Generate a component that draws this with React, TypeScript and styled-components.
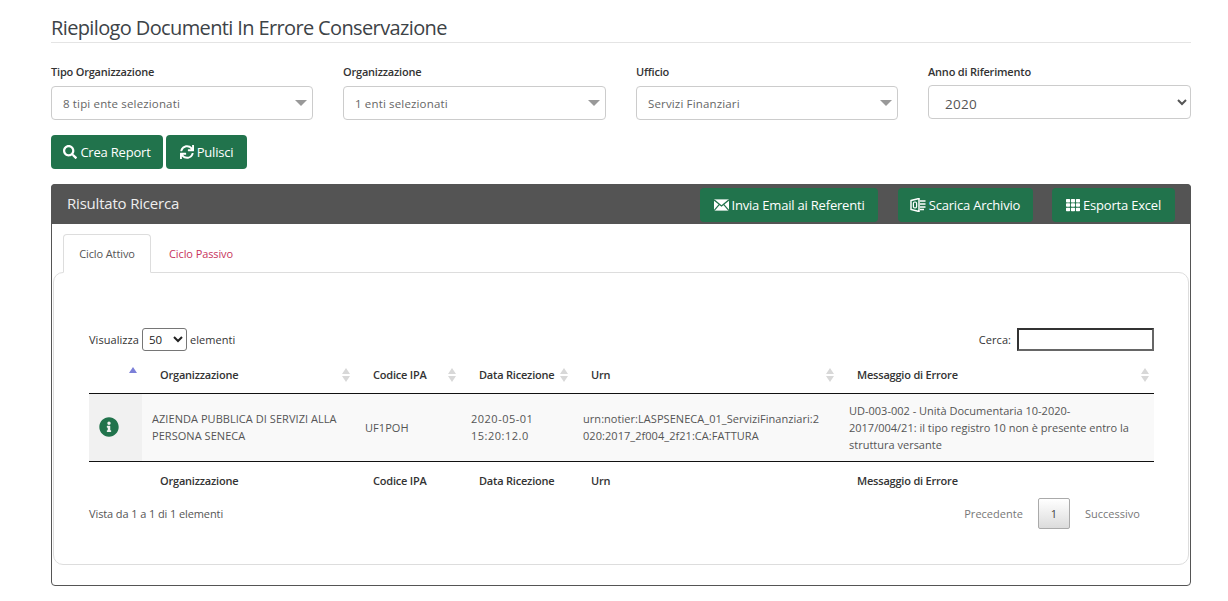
import React from 'react';
import styled, { createGlobalStyle } from 'styled-components';
import { FaSearch, FaSync, FaTh, FaInfoCircle } from 'react-icons/fa';

const GlobalStyle = createGlobalStyle`
    html, body {
        margin: 0;
        padding: 0;
        background: #fff;
        font-family: "Open Sans", "Liberation Sans", sans-serif;
        color: #4a4a4a;
        overflow: hidden;
    }
`;

const Page = styled.div`
    width: 1228px;
    height: 601px;
    box-sizing: border-box;
    padding: 15px 37px 0 51px;
`;

const Title = styled.h3`
    margin: 0;
    height: 27px;
    line-height: 26px;
    font-family: "Open Sans", sans-serif;
    font-size: 20px;
    font-weight: 400;
    letter-spacing: -0.63px;
    color: #3d4347;
    border-bottom: 1px solid #e4e4e4;
`;

const Filters = styled.div`
    display: grid;
    grid-template-columns: 262px 263px 262px 263px;
    column-gap: 30px;
    margin-top: 22px;
`;

const Field = styled.div`
    display: flex;
    flex-direction: column;
`;

const Label = styled.label`
    font-size: 11px;
    font-weight: 600;
    line-height: 14px;
    height: 21px;
    color: #333;
    letter-spacing: -0.2px;
`;

const FakeSelect = styled.div`
    height: 34px;
    box-sizing: border-box;
    border: 1px solid #ccc;
    border-radius: 4px;
    padding: 0 5px 0 11px;
    display: flex;
    align-items: center;
    justify-content: space-between;
    font-size: 11.5px;
    color: #666;
    letter-spacing: 0.15px;
`;

const Caret = styled.span`
    width: 0;
    height: 0;
    border-left: 6px solid transparent;
    border-right: 6px solid transparent;
    border-top: 6px solid #999;
`;

const YearSelect = styled.select`
    height: 34px;
    margin-top: -1px;
    box-sizing: border-box;
    border: 1px solid #ccc;
    border-radius: 4px;
    background: #fff;
    padding: 4px 12px 0;
    font-family: inherit;
    font-size: 13.5px;
    letter-spacing: 0.3px;
    color: #555;
`;

const Actions = styled.div`
    display: flex;
    gap: 3px;
    margin-top: 15px;
`;

const GreenButton = styled.button<{ $w: number }>`
    width: ${p => p.$w}px;
    height: 34px;
    padding: 0;
    display: inline-flex;
    align-items: center;
    justify-content: center;
    gap: 3px;
    border: none;
    border-radius: 4px;
    background: #21734c;
    color: #fff;
    font-family: inherit;
    font-size: 13px;
    letter-spacing: -0.2px;
    white-space: nowrap;
`;

const Panel = styled.section`
    margin-top: 15px;
    height: 402px;
    box-sizing: border-box;
    border: 1px solid #555;
    border-radius: 4px;
    background: #fff;
`;

const PanelHeader = styled.header`
    height: 40px;
    margin: -1px -1px 0;
    padding: 0 16px;
    background: #545454;
    border-radius: 4px 4px 0 0;
    display: flex;
    align-items: center;
    color: #eee;
`;

const PanelTitle = styled.div`
    font-size: 15px;
    font-weight: 400;
    letter-spacing: -0.2px;
    margin-top: -3px;
    margin-right: auto;
`;

const HeaderButtons = styled.div`
    display: flex;
    gap: 19.5px;
    margin-top: 2px;
`;

const Tabs = styled.nav`
    display: flex;
    margin: 10px 0 0 11px;
    height: 39px;
    font-size: 11px;
    letter-spacing: -0.1px;
`;

const Tab = styled.div<{ $active?: boolean }>`
    width: ${p => (p.$active ? '88px' : 'auto')};
    box-sizing: border-box;
    padding: ${p => (p.$active ? '0' : '0 17px')};
    display: flex;
    align-items: center;
    justify-content: center;
    color: ${p => (p.$active ? '#555' : '#c7335c')};
    border: 1px solid ${p => (p.$active ? '#ddd' : 'transparent')};
    border-bottom-color: ${p => (p.$active ? '#fff' : 'transparent')};
    border-radius: 4px 4px 0 0;
    background: ${p => (p.$active ? '#fff' : 'transparent')};
    position: relative;
    z-index: ${p => (p.$active ? 1 : 0)};
`;

const Card = styled.div`
    margin: -1px 1px 0;
    height: 293px;
    box-sizing: border-box;
    border: 1px solid #ddd;
    border-radius: 10px;
    padding: 55px 34px 0 35px;
`;

const TableTop = styled.div`
    display: flex;
    justify-content: space-between;
    align-items: center;
    height: 23px;
    font-size: 11px;
    color: #333;
    letter-spacing: 0.05px;
`;

const InlineGroup = styled.div`
    display: flex;
    align-items: center;
    gap: 3px;
`;

const LengthSelect = styled.select`
    width: 45px;
    height: 23px;
    border: 1px solid #767676;
    border-radius: 3px;
    background: #fff;
    font-family: inherit;
    font-size: 11.5px;
    color: #222;
    padding: 0 0 0 2px;
`;

const SearchInput = styled.input`
    width: 137px;
    height: 23px;
    box-sizing: border-box;
    margin-left: 3px;
    border: 2px solid;
    border-color: #333 #666 #666 #333;
    background: #fff;
`;

const Table = styled.table`
    width: 1065px;
    margin-top: 7px;
    border-collapse: separate;
    border-spacing: 0;
    table-layout: fixed;
    font-size: 11px;
`;

const Th = styled.th<{ $w?: number }>`
    ${p => (p.$w ? `width: ${p.$w}px;` : '')}
    height: 36px;
    box-sizing: border-box;
    padding: 0 18px 2px;
    text-align: left;
    font-weight: 600;
    letter-spacing: -0.2px;
    color: #333;
    white-space: nowrap;
    position: relative;
    border-bottom: 1px solid #111;
`;

const FootTh = styled(Th)`
    border-bottom: none;
    border-top: 1px solid #111;
    height: 38px;
    padding-bottom: 0;
`;

const Td = styled.td<{ $sorted?: boolean; $digits?: boolean }>`
    padding: 0 10px 1px;
    height: 67px;
    box-sizing: border-box;
    background: ${p => (p.$sorted ? '#f1f1f1' : '#f9f9f9')};
    line-height: 17px;
    color: #555;
    letter-spacing: ${p => (p.$digits ? '0.5px' : '0.05px')};
`;

const UrnCell = styled(Td)`
    word-break: break-all;
    padding-right: 14px;
`;

const MessageCell = styled(Td)`
    padding-right: 8px;
    letter-spacing: 0;
`;

const SortIcons = styled.span`
    position: absolute;
    right: 5px;
    top: 50%;
    margin-top: -8px;
    display: flex;
    flex-direction: column;
    gap: 2px;
`;

const Arrow = styled.i<{ $down?: boolean; $on?: boolean }>`
    display: block;
    width: 0;
    height: 0;
    border-left: 4px solid transparent;
    border-right: 4px solid transparent;
    ${p =>
        p.$down
            ? `border-top: 6px solid #d8d8d8;`
            : `border-bottom: 6px solid ${p.$on ? '#7b7fd8' : '#d8d8d8'};`}
`;

const RaisedArrow = styled.span`
    position: absolute;
    left: 40px;
    top: 9px;
`;

const InfoWrap = styled.div`
    display: flex;
    color: #21734c;
    font-size: 20px;
    line-height: 0;
`;

const TableBottom = styled.div`
    display: flex;
    justify-content: space-between;
    align-items: center;
    margin-top: -1px;
    font-size: 11px;
    letter-spacing: -0.1px;
    color: #555;
`;

const Pager = styled.div`
    display: flex;
    align-items: center;
    padding-right: 14px;
    color: #777;
    letter-spacing: 0.02px;
`;

const PageButton = styled.span`
    width: 32px;
    height: 31px;
    box-sizing: border-box;
    margin: 0 15px;
    display: flex;
    align-items: center;
    justify-content: center;
    border: 1px solid #aaa;
    border-radius: 2px;
    background: linear-gradient(#fff, #dcdcdc);
    color: #444;
`;

const MailIcon = () => (
    <svg width="15" height="12" viewBox="0 0 16 12">
        <rect width="16" height="12" fill="#fff" />
        <path d="M0 0.5 L8 7 L16 0.5 M0 12 L5.5 5.5 M16 12 L10.5 5.5" fill="none" stroke="#21734c" strokeWidth="1.3" />
    </svg>
);

const ArchiveIcon = () => (
    <svg width="16" height="14" viewBox="0 0 16 14">
        <path d="M1 2.5 L9 0.5 V13.5 L1 11.5 Z" fill="none" stroke="#fff" strokeWidth="1.5" />
        <rect x="3.4" y="4" width="3.2" height="6" rx="1.4" fill="none" stroke="#fff" strokeWidth="1.2" />
        <path d="M10 3 H15.5 M10 6 H15.5 M10 9 H15.5 M10 11.5 H14" stroke="#fff" strokeWidth="1.5" />
    </svg>
);

const Sort = () => (
    <SortIcons>
        <Arrow />
        <Arrow $down />
    </SortIcons>
);

const columns = [
    { label: 'Organizzazione', w: 213 },
    { label: 'Codice IPA', w: 106 },
    { label: 'Data Ricezione', w: 112 },
    { label: 'Urn', w: 266 },
    { label: 'Messaggio di Errore', w: 315 },
];

export default function App() {
    return (
        <Page>
            <GlobalStyle />
            <Title>Riepilogo Documenti In Errore Conservazione</Title>

            <Filters>
                <Field>
                    <Label>Tipo Organizzazione</Label>
                    <FakeSelect>8 tipi ente selezionati<Caret /></FakeSelect>
                </Field>
                <Field>
                    <Label>Organizzazione</Label>
                    <FakeSelect>1 enti selezionati<Caret /></FakeSelect>
                </Field>
                <Field>
                    <Label>Ufficio</Label>
                    <FakeSelect>Servizi Finanziari<Caret /></FakeSelect>
                </Field>
                <Field>
                    <Label>Anno di Riferimento</Label>
                    <YearSelect defaultValue="2020">
                        <option>2020</option>
                    </YearSelect>
                </Field>
            </Filters>

            <Actions>
                <GreenButton $w={112}><FaSearch size={14} />Crea Report</GreenButton>
                <GreenButton $w={81}><FaSync size={14} />Pulisci</GreenButton>
            </Actions>

            <Panel>
                <PanelHeader>
                    <PanelTitle>Risultato Ricerca</PanelTitle>
                    <HeaderButtons>
                        <GreenButton $w={178}><MailIcon />Invia Email ai Referenti</GreenButton>
                        <GreenButton $w={135}><ArchiveIcon />Scarica Archivio</GreenButton>
                        <GreenButton $w={123}><FaTh size={14} />Esporta Excel</GreenButton>
                    </HeaderButtons>
                </PanelHeader>

                <Tabs>
                    <Tab $active>Ciclo Attivo</Tab>
                    <Tab>Ciclo Passivo</Tab>
                </Tabs>

                <Card>
                    <TableTop>
                        <InlineGroup>
                            Visualizza
                            <LengthSelect defaultValue="50">
                                <option>50</option>
                            </LengthSelect>
                            elementi
                        </InlineGroup>
                        <InlineGroup>
                            Cerca: <SearchInput />
                        </InlineGroup>
                    </TableTop>

                    <Table>
                        <thead>
                            <tr>
                                <Th $w={53}>
                                    <RaisedArrow><Arrow $on /></RaisedArrow>
                                </Th>
                                {columns.map(c => (
                                    <Th key={c.label} $w={c.w}>
                                        {c.label}
                                        <Sort />
                                    </Th>
                                ))}
                            </tr>
                        </thead>
                        <tbody>
                            <tr>
                                <Td $sorted>
                                    <InfoWrap><FaInfoCircle /></InfoWrap>
                                </Td>
                                <Td>AZIENDA PUBBLICA DI SERVIZI ALLA PERSONA SENECA</Td>
                                <Td>UF1POH</Td>
                                <Td $digits>2020-05-01 15:20:12.0</Td>
                                <UrnCell>urn:notier:LASPSENECA_01_ServiziFinanziari:2020:2017_2f004_2f21:CA:FATTURA</UrnCell>
                                <MessageCell>
                                    UD-003-002 - Unità Documentaria 10-2020-<br />
                                    2017/004/21: il tipo registro 10 non è presente entro la struttura versante
                                </MessageCell>
                            </tr>
                        </tbody>
                        <tfoot>
                            <tr>
                                <FootTh />
                                {columns.map(c => (
                                    <FootTh key={c.label}>{c.label}</FootTh>
                                ))}
                            </tr>
                        </tfoot>
                    </Table>

                    <TableBottom>
                        <span>Vista da 1 a 1 di 1 elementi</span>
                        <Pager>
                            Precedente
                            <PageButton>1</PageButton>
                            Successivo
                        </Pager>
                    </TableBottom>
                </Card>
            </Panel>
        </Page>
    );
}
